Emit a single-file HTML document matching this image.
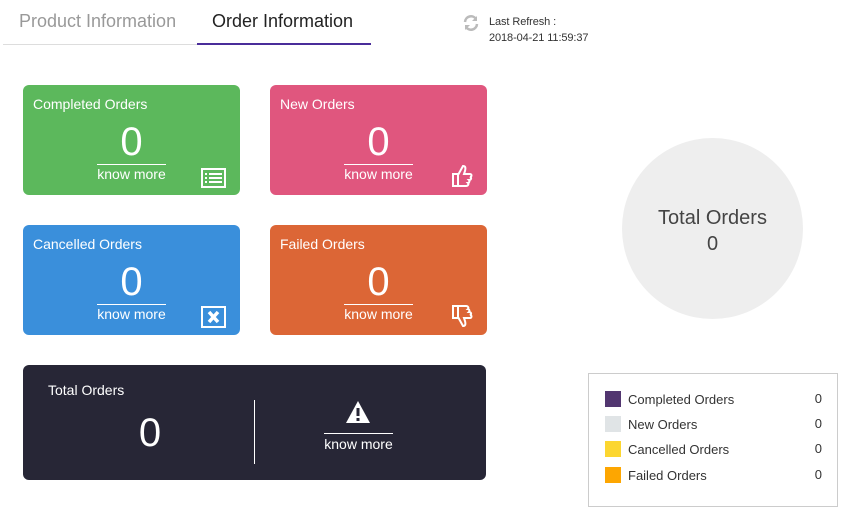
<!DOCTYPE html><html><head><style>
body{margin:0;width:858px;height:522px;background:#fff;font-family:"Liberation Sans",sans-serif;position:relative;overflow:hidden}
.a{position:absolute}
.card{position:absolute;width:217px;height:110px;border-radius:6px;color:#fff}
.card .t{position:absolute;left:10px;top:11px;font-size:14px}
.card .n{position:absolute;left:74px;width:69px;top:35px;text-align:center;font-size:40px;line-height:44px;border-bottom:1px solid #fff;padding-bottom:0}
.card .k{position:absolute;left:74px;width:69px;top:81px;text-align:center;font-size:14px}
.card svg{position:absolute;right:14px;bottom:7px}
.lg{position:absolute;left:16px;font-size:13px;color:#333;width:217px}
.lg i{display:inline-block;width:16px;height:16px;vertical-align:-3px;margin-right:7px}
.lg b{font-weight:normal;position:absolute;right:0}
</style></head><body>
<div class="a" style="left:19px;top:11px;font-size:18px;color:#999">Product Information</div>
<div class="a" style="left:212px;top:11px;font-size:18px;color:#222">Order Information</div>
<div class="a" style="left:3px;top:44px;width:194px;height:1px;background:#ddd"></div>
<div class="a" style="left:197px;top:43px;width:174px;height:2px;background:#4a2d9a"></div>
<svg class="a" style="left:463px;top:15px" width="16" height="16" viewBox="0 0 16 16"><path d="M2 7a6 6 0 0 1 11-3M14 9a6 6 0 0 1-11 3" stroke="#bbb" stroke-width="2.5" fill="none"/><path d="M14 1v5h-5zM2 15v-5h5z" fill="#bbb"/></svg>
<div class="a" style="left:489px;top:14px;font-size:11px;color:#333;line-height:16px;letter-spacing:-0.1px">Last Refresh :<br>2018-04-21 11:59:37</div>

<div class="card" style="left:23px;top:85px;background:#5cb85c"><div class="t">Completed Orders</div><div class="n">0</div><div class="k">know more</div>
<svg width="25" height="20" viewBox="0 0 25 20"><rect x="1" y="1" width="23" height="18" fill="none" stroke="#fff" stroke-width="2"/><path d="M4 6h2M8 6h13M4 10h2M8 10h13M4 14h2M8 14h13" stroke="#fff" stroke-width="2"/></svg></div>
<div class="card" style="left:270px;top:85px;background:#e0567e"><div class="t">New Orders</div><div class="n">0</div><div class="k">know more</div>
<svg width="22" height="24" viewBox="0 0 22 24"><path d="M2 10h5v12H2zM7 11l5-9c2 0 3 1 2 5l-1 3h6c2 0 2 3 0 3 2 1 1 3-1 3 1 1 0 3-1 3 1 1 0 3-2 3H7" fill="none" stroke="#fff" stroke-width="2"/></svg></div>
<div class="card" style="left:23px;top:225px;background:#3a8fdb"><div class="t">Cancelled Orders</div><div class="n">0</div><div class="k">know more</div>
<svg width="25" height="22" viewBox="0 0 25 22"><rect x="1" y="1" width="23" height="20" fill="none" stroke="#fff" stroke-width="2"/><path d="M8 6l9 10M17 6l-9 10" stroke="#fff" stroke-width="3.5"/></svg></div>
<div class="card" style="left:270px;top:225px;background:#dc6636"><div class="t">Failed Orders</div><div class="n">0</div><div class="k">know more</div>
<svg width="22" height="24" viewBox="0 0 22 24" style="transform:scaleY(-1)"><path d="M2 10h5v12H2zM7 11l5-9c2 0 3 1 2 5l-1 3h6c2 0 2 3 0 3 2 1 1 3-1 3 1 1 0 3-1 3 1 1 0 3-2 3H7" fill="none" stroke="#fff" stroke-width="2"/></svg></div>

<div class="a" style="left:23px;top:365px;width:463px;height:115px;background:#272636;border-radius:6px;color:#fff">
<div class="a" style="left:25px;top:17px;font-size:14px">Total Orders</div>
<div class="a" style="left:97px;top:46px;width:60px;text-align:center;font-size:40px">0</div>
<div class="a" style="left:231px;top:35px;width:1px;height:64px;background:#fff"></div>
<svg class="a" style="left:322px;top:35px" width="26" height="24" viewBox="0 0 26 24"><path d="M13 1L25 23H1z" fill="#fff"/><path d="M13 8v8M13 18v3" stroke="#272636" stroke-width="3"/></svg>
<div class="a" style="left:301px;top:68px;width:69px;height:1px;background:#fff"></div>
<div class="a" style="left:295px;top:71px;width:81px;text-align:center;font-size:14px">know more</div>
</div>

<div class="a" style="left:622px;top:138px;width:181px;height:181px;border-radius:50%;background:#eee;color:#444;text-align:center">
<div style="margin-top:69px;font-size:20px">Total Orders</div><div style="font-size:20px;margin-top:3px">0</div></div>

<div class="a" style="left:588px;top:373px;width:248px;height:132px;border:1px solid #ccc">
<div class="lg" style="top:17px"><i style="background:#523670"></i>Completed Orders<b>0</b></div>
<div class="lg" style="top:42px"><i style="background:#e0e4e6"></i>New Orders<b>0</b></div>
<div class="lg" style="top:67px"><i style="background:#fcd630"></i>Cancelled Orders<b>0</b></div>
<div class="lg" style="top:93px"><i style="background:#fda601"></i>Failed Orders<b>0</b></div>
</div>
</body></html>
